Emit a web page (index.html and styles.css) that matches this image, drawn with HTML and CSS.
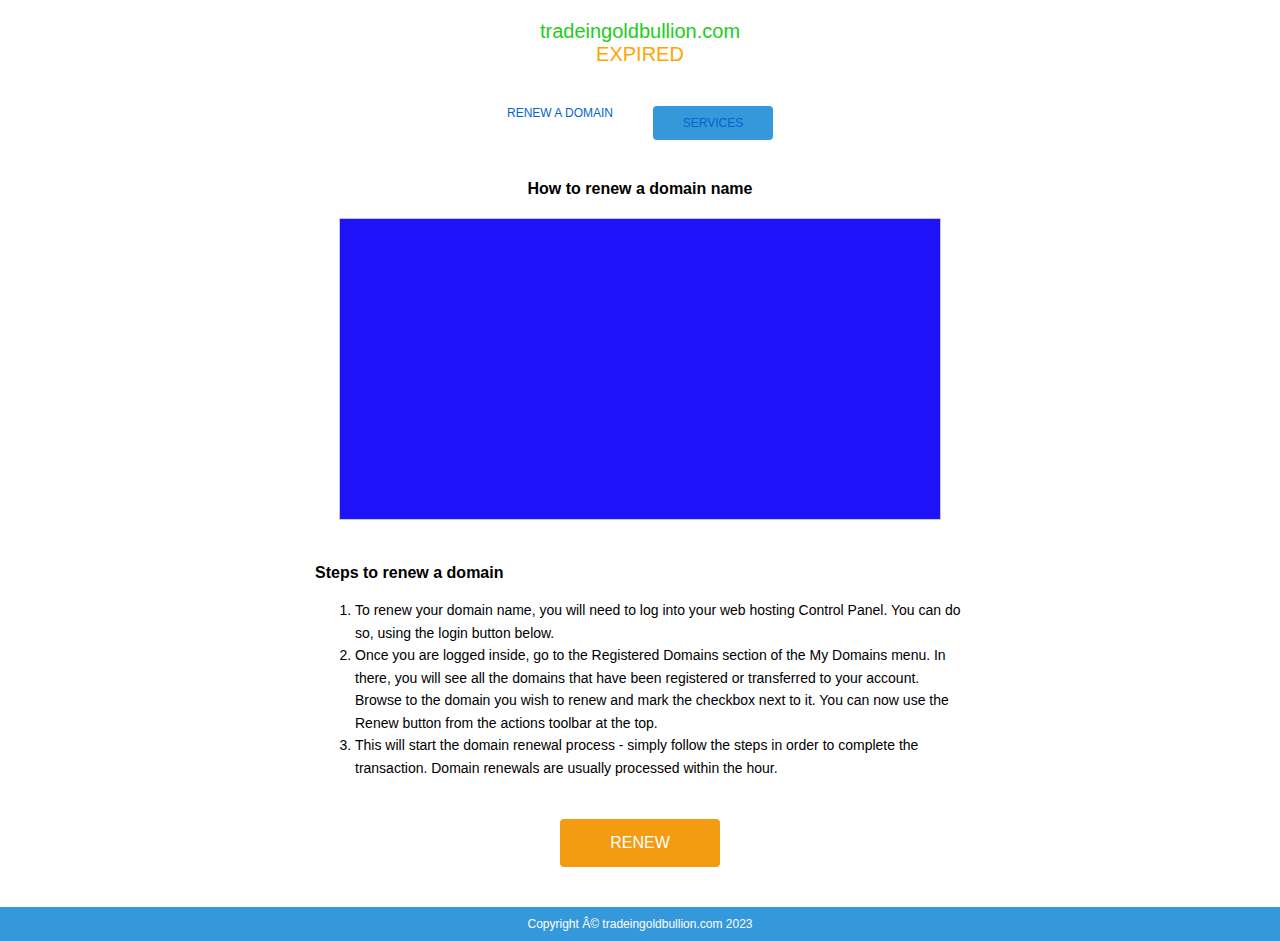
FILE: index.html
```html
<!DOCTYPE html>
<html lang="en">
<head>
<meta charset="utf-8">
<title>tradeingoldbullion.com EXPIRED</title>
<link rel="stylesheet" href="styles.css">
</head>
<body>
<header class="site-header">
  <div class="domain">tradeingoldbullion.com</div>
  <div class="status">EXPIRED</div>
</header>
<nav class="nav">
  <a class="nav-link" href="#">RENEW A DOMAIN</a>
  <a class="nav-button" href="#">SERVICES</a>
</nav>
<main class="content">
  <h2 class="video-title">How to renew a domain name</h2>
  <div class="video-wrap"><div class="video"></div></div>
  <h2 class="steps-title">Steps to renew a domain</h2>
  <ol class="steps">
    <li>To renew your domain name, you will need to log into your web hosting Control Panel. You can do so, using the login button below.</li>
    <li>Once you are logged inside, go to the Registered Domains section of the My Domains menu. In there, you will see all the domains that have been registered or transferred to your account. Browse to the domain you wish to renew and mark the checkbox next to it. You can now use the Renew button from the actions toolbar at the top.</li>
    <li>This will start the domain renewal process - simply follow the steps in order to complete the transaction. Domain renewals are usually processed within the hour.</li>
  </ol>
  <div class="renew-wrap"><a class="renew-button" href="#">RENEW</a></div>
</main>
<footer class="footer">Copyright Â© tradeingoldbullion.com 2023</footer>
</body>
</html>
```
FILE: styles.css
```css
html, body {
  margin: 0;
  padding: 0;
  background: #fff;
  font-family: "Liberation Sans", Arial, Helvetica, sans-serif;
  color: #000;
}

.site-header {
  padding-top: 20px;
  text-align: center;
  font-size: 20px;
  line-height: 23px;
}

.domain { color: #22cc22; }
.status { color: #ffa500; }

.nav {
  margin-top: 40px;
  display: flex;
  justify-content: center;
  align-items: flex-start;
  gap: 40px;
  font-size: 12px;
}

.nav-link {
  color: #0066cc;
  text-decoration: none;
  line-height: 14px;
}

.nav-button {
  display: block;
  width: 120px;
  height: 34px;
  line-height: 34px;
  text-align: center;
  background: #3498db;
  color: #0066cc;
  border-radius: 4px;
  text-decoration: none;
}

.content {
  width: 650px;
  margin: 0 auto;
}

.video-title {
  margin: 40px 0 0;
  font-size: 16px;
  line-height: 18px;
  text-align: center;
}

.video-wrap {
  margin-top: 20px;
  display: flex;
  justify-content: center;
}

.video {
  width: 600px;
  height: 300px;
  background: #1e12f9;
  border: 1px solid #c8c8d8;
}

.steps-title {
  margin: 44px 0 0;
  font-size: 16px;
  line-height: 18px;
}

.steps {
  margin: 17px 0 0;
  padding-left: 40px;
  font-size: 14px;
  line-height: 22.5px;
}

.renew-wrap {
  margin-top: 40px;
  display: flex;
  justify-content: center;
}

.renew-button {
  display: block;
  width: 160px;
  height: 48px;
  line-height: 48px;
  text-align: center;
  background: #f39c12;
  color: #fff;
  font-size: 16px;
  border-radius: 4px;
  text-decoration: none;
}

.footer {
  margin-top: 40px;
  height: 34px;
  line-height: 34px;
  background: #3498db;
  color: #fff;
  font-size: 12px;
  text-align: center;
}
```
